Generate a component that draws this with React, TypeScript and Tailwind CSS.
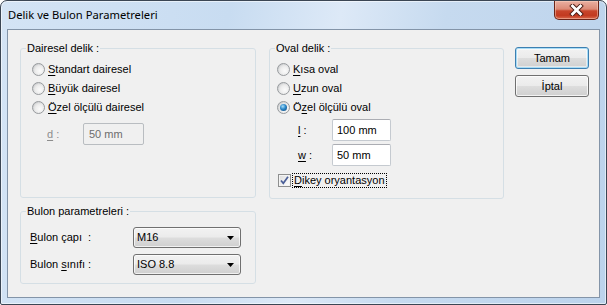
import type { ReactNode } from 'react';

const font = "font-['Liberation_Sans',Arial,sans-serif]";

function U({ children }: { children: ReactNode }) {
  return <span className="underline underline-offset-[2px] decoration-1">{children}</span>;
}

function Radio({ checked = false }: { checked?: boolean }) {
  return (
    <span className="w-[13px] h-[13px] shrink-0 rounded-full border border-[#979a9d] bg-[linear-gradient(135deg,#c4c6c8_0%,#e2e3e4_45%,#f7f7f7_100%)] flex items-center justify-center">
      <span className="w-[9px] h-[9px] rounded-full bg-[radial-gradient(circle_at_65%_65%,#fbfbfb_0%,#eeeeee_50%,#d4d4d4_100%)] flex items-center justify-center">
        {checked && (
          <span className="w-[7px] h-[7px] rounded-full bg-[radial-gradient(circle_at_40%_35%,#a8def8_0%,#2a86c8_45%,#0c3f70_100%)]" />
        )}
      </span>
    </span>
  );
}

function RadioRow({ checked, children }: { checked?: boolean; children: ReactNode }) {
  return (
    <div className="h-[19px] flex items-center gap-[3px]">
      <Radio checked={checked} />
      <span className="leading-[13px]">{children}</span>
    </div>
  );
}

function Group({ title, className, children }: { title: string; className: string; children: ReactNode }) {
  return (
    <div className={`relative border border-[#d5dfe5] rounded-[3px] ${className}`}>
      <span className="absolute left-[5px] top-[-8px] px-[1px] bg-[#f0f0f0] leading-[14px]">{title}</span>
      {children}
    </div>
  );
}

function TextBox({ value, disabled = false, w }: { value: string; disabled?: boolean; w: string }) {
  return (
    <div
      className={`${w} h-[22px] rounded-[2px] border flex items-center ${
        disabled
          ? 'bg-[#f0f0f0] border-[#b9bdc1] text-[#6d6d6d] pl-[5px]'
          : 'bg-white border-[#c5cad0] border-t-[#abadb3] text-black pl-[4px]'
      }`}
    >
      {value}
    </div>
  );
}

function Combo({ value }: { value: string }) {
  return (
    <div className="w-[108px] h-[21px] rounded-[3px] border border-[#707070] bg-[linear-gradient(#f2f2f2_0%,#ebebeb_48%,#dddddd_52%,#cfcfcf_100%)] shadow-[inset_0_0_0_1px_rgba(255,255,255,0.7)] flex items-center pl-[3px] pr-[6px]">
      <span className="flex-1">{value}</span>
      <svg width="7" height="4" viewBox="0 0 7 4">
        <path d="M0 0 H7 L3.5 4 Z" fill="#000" />
      </svg>
    </div>
  );
}

function Button({ label, primary = false }: { label: string; primary?: boolean }) {
  return (
    <div
      className={`w-[74px] h-[22px] rounded-[3px] border flex items-center justify-center bg-[linear-gradient(#f2f2f2_0%,#ebebeb_48%,#dddddd_52%,#cfcfcf_100%)] ${
        primary
          ? 'border-[#3c7fb1] shadow-[inset_0_0_0_1px_#a8dcf6,inset_0_0_0_2px_rgba(255,255,255,0.5)]'
          : 'border-[#707070] shadow-[inset_0_0_0_1px_rgba(255,255,255,0.75)]'
      }`}
    >
      {label}
    </div>
  );
}

export default function App() {
  return (
    <div
      className={`w-[607px] h-[305px] flex flex-col border border-[#3b4654] rounded-t-[7px] rounded-b-[2px] overflow-hidden bg-[linear-gradient(100deg,#d4e4f5_0%,#c8dcf1_35%,#dde9f7_52%,#c6daef_68%,#bcd3ec_100%)] shadow-[inset_0_0_0_1px_rgba(255,255,255,0.55)] text-[11px] text-black ${font}`}
    >
      {/* title bar */}
      <div className="h-[28px] flex items-start shrink-0">
        <span className="pl-[7px] pt-[6px] leading-[16px] text-[11.2px] font-['Noto_Sans',sans-serif] text-black">
          Delik ve Bulon Parametreleri
        </span>
        <div className="ml-auto mr-[7px] w-[45px] h-[19px] rounded-b-[5px] border border-t-0 border-[#6b2418] bg-[linear-gradient(#eab0a2_0%,#dc8a76_45%,#c8452b_55%,#c23a20_80%,#d9684c_100%)] shadow-[inset_0_0_0_1px_rgba(255,220,200,0.45)] flex items-center justify-center">
          <svg width="15" height="12" viewBox="0 0 15 12">
            <path d="M3.5 2 L11.5 10 M11.5 2 L3.5 10" stroke="#4a1a12" strokeWidth="4.6" strokeLinecap="square" />
            <path d="M3.5 2 L11.5 10 M11.5 2 L3.5 10" stroke="#ffffff" strokeWidth="2.8" strokeLinecap="square" />
          </svg>
        </div>
      </div>

      {/* client area */}
      <div className="mx-[6px] h-[269px] shrink-0 border border-[#8394a8] bg-[#f0f0f0] flex items-start pl-[12px] pt-[18px]">
        <div className="w-[236px] flex flex-col gap-[13px]">
          <Group title="Dairesel delik :" className="h-[150px] pl-[11px] pt-[11px]">
            <RadioRow><U>S</U>tandart dairesel</RadioRow>
            <RadioRow><U>B</U>üyük dairesel</RadioRow>
            <RadioRow><U>Ö</U>zel ölçülü dairesel</RadioRow>
            <div className="mt-[6px] ml-[15px] flex items-center">
              <span className="w-[36px] text-[#8d8d8d]"><U>d</U> :</span>
              <TextBox value="50 mm" disabled w="w-[61px]" />
            </div>
          </Group>

          <Group title="Bulon parametreleri :" className="h-[73px] pl-[9px] pt-[15px]">
            <div className="flex items-center">
              <span className="w-[103px]"><U>B</U>ulon çapı&nbsp; :</span>
              <Combo value="M16" />
            </div>
            <div className="flex items-center mt-[6px]">
              <span className="w-[103px]">Bulon <U>s</U>ınıfı :</span>
              <Combo value="ISO 8.8" />
            </div>
          </Group>
        </div>

        <Group title="Oval delik :" className="ml-[13px] w-[235px] h-[151px] pl-[7px] pt-[11px]">
          <RadioRow><U>K</U>ısa oval</RadioRow>
          <RadioRow><U>U</U>zun oval</RadioRow>
          <RadioRow checked>Ö<U>z</U>el ölçülü oval</RadioRow>
          <div className="mt-[2px] ml-[21px] flex items-center">
            <span className="w-[34px]"><U>l</U> :</span>
            <TextBox value="100 mm" w="w-[59px]" />
          </div>
          <div className="mt-[3px] ml-[21px] flex items-center">
            <span className="w-[34px]"><U>w</U> :</span>
            <TextBox value="50 mm" w="w-[59px]" />
          </div>
          <div className="mt-[7px] ml-[1px] flex items-center">
            <span className="w-[13px] h-[13px] border border-[#8e8f8f] bg-[linear-gradient(135deg,#dcdcdc_0%,#f6f6f6_70%,#ffffff_100%)] shadow-[inset_0_0_0_1px_#f4f4f4] flex items-center justify-center">
              <svg width="11" height="11" viewBox="0 0 11 11">
                <path d="M2 5.5 L4.3 8.3 L9 1.8" fill="none" stroke="#4b5f98" strokeWidth="1.7" />
              </svg>
            </span>
            <span className="ml-[1px] px-[1px] leading-[13px] border border-dotted border-black"><U>D</U>ikey oryantasyon</span>
          </div>
        </Group>

        <div className="ml-[11px] -mt-[1px] flex flex-col gap-[6px]">
          <Button label="Tamam" primary />
          <Button label="İptal" />
        </div>
      </div>
    </div>
  );
}
